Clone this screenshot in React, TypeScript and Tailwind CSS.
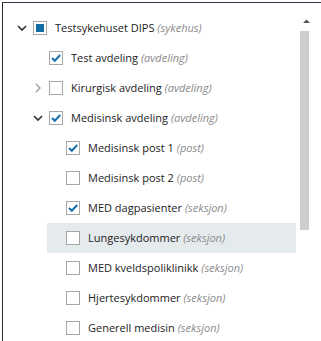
import { useState } from "react"

type Node = {
  label: string
  kind: string
  level: number
  state: "on" | "off" | "partial"
  chevron?: "open" | "closed"
  hover?: boolean
}

const rows: Node[] = [
  { label: "Testsykehuset DIPS", kind: "sykehus", level: 0, state: "partial", chevron: "open" },
  { label: "Test avdeling", kind: "avdeling", level: 1, state: "on" },
  { label: "Kirurgisk avdeling", kind: "avdeling", level: 1, state: "off", chevron: "closed" },
  { label: "Medisinsk avdeling", kind: "avdeling", level: 1, state: "on", chevron: "open" },
  { label: "Medisinsk post 1", kind: "post", level: 2, state: "on" },
  { label: "Medisinsk post 2", kind: "post", level: 2, state: "off" },
  { label: "MED dagpasienter", kind: "seksjon", level: 2, state: "on" },
  { label: "Lungesykdommer", kind: "seksjon", level: 2, state: "off", hover: true },
  { label: "MED kveldspoliklinikk", kind: "seksjon", level: 2, state: "off" },
  { label: "Hjertesykdommer", kind: "seksjon", level: 2, state: "off" },
  { label: "Generell medisin", kind: "seksjon", level: 2, state: "off" },
]

function Chevron({ open }: { open: boolean }) {
  return (
    <svg width="10" height="10" viewBox="0 0 10 10" className="shrink-0">
      {open ? (
        <path d="M1 3 L5 7 L9 3" fill="none" stroke="#333" strokeWidth="1.6" />
      ) : (
        <path d="M3 1 L7 5 L3 9" fill="none" stroke="#999" strokeWidth="1.3" />
      )}
    </svg>
  )
}

function Box({ state }: { state: Node["state"] }) {
  return (
    <div className="w-[14px] h-[14px] border border-[#a6a6a6] bg-white flex items-center justify-center shrink-0">
      {state === "partial" && <div className="w-[8px] h-[8px] bg-[#0f6fa5]" />}
      {state === "on" && (
        <svg width="12" height="12" viewBox="0 0 12 12">
          <path d="M2 6 L4.8 8.8 L10.2 3" fill="none" stroke="#1670ad" strokeWidth="2" />
        </svg>
      )}
    </div>
  )
}

// row offsets: wrapper margin-left / inner padding-left per level
const rowMl = ["ml-[14px]", "ml-[30px]", "ml-[44px]"]
const rowPl = ["pl-0", "pl-0", "pl-[3px]"]

export default function App() {
  const [items] = useState(rows)

  return (
    <div className="w-[321px] h-[341px] bg-white overflow-hidden pt-[2px] pl-[2px]" style={{ fontFamily: '"Open Sans", sans-serif' }}>
      <div className="h-full border-t border-l border-l-[#2b2b2b] border-t-[#2e3a4a] flex">
        <div className="w-[293px] pt-[10px]">
          {items.map((n, i) => (
            <div
              key={i}
              className={`h-[30px] flex items-center text-[11px] text-[#222] ${rowMl[n.level]} ${rowPl[n.level]} ${n.hover ? "bg-[#e5eaed]" : ""}`}
            >
              <div className="w-[16px] flex items-center">
                {n.chevron && <Chevron open={n.chevron === "open"} />}
              </div>
              <Box state={n.state} />
              <span className="ml-[8px] whitespace-nowrap">
                {n.label} <i className="text-[#8a8a8a]">({n.kind})</i>
              </span>
            </div>
          ))}
        </div>
        <div className="flex-1 flex flex-col items-start pt-[16px]">
          <svg width="7" height="4" viewBox="0 0 7 4" className="ml-[7px]">
            <path d="M0 4 L3.5 0.5 L7 4 Z" fill="#555" />
          </svg>
          <div className="w-[9px] h-[199px] bg-[#cdcdcd] mt-[8px] ml-[4px]" />
        </div>
      </div>
    </div>
  )
}
